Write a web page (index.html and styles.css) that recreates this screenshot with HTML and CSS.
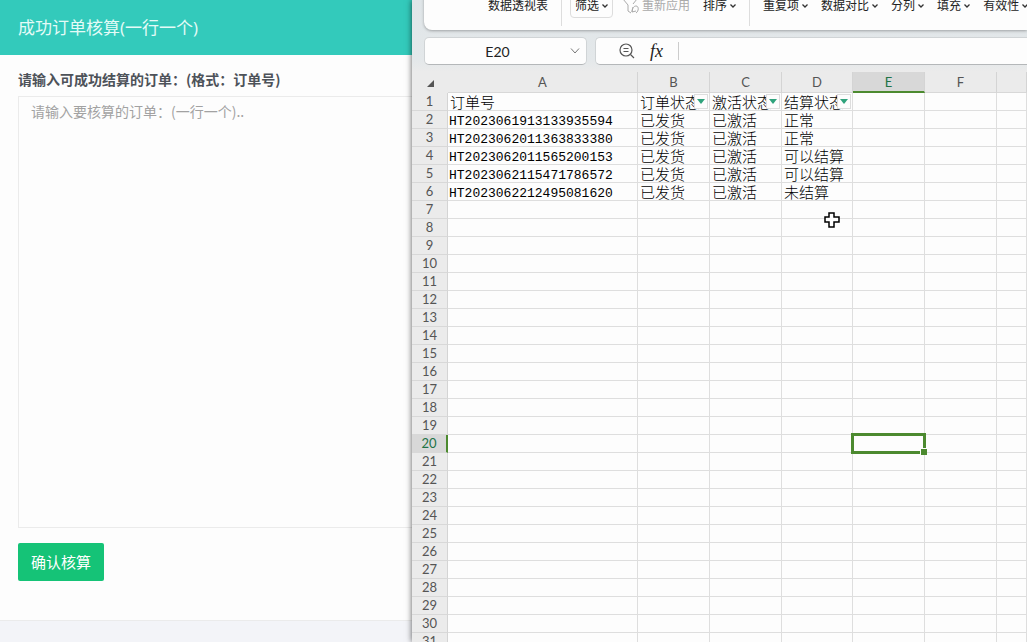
FILE: index.html
```html
<!DOCTYPE html>
<html lang="zh-CN">
<head>
<meta charset="utf-8">
<title>成功订单核算</title>
<link rel="stylesheet" href="styles.css">
</head>
<body>
<div class="desktop">
  <main class="panel">
    <h1 class="panel-title">成功订单核算(一行一个)</h1>
    <form class="panel-form">
      <label class="form-label" for="orders">请输入可成功结算的订单：(格式：订单号)</label>
      <textarea class="form-text" id="orders" placeholder="请输入要核算的订单：(一行一个).."></textarea>
      <button class="submit" type="button">确认核算</button>
    </form>
  </main>
  <section class="sheet">
    <div class="ribbon">
      <button class="tool" type="button">数据透视表</button>
      <span class="divider"></span>
      <button class="tool framed" type="button">筛选<svg class="chev" viewBox="0 0 6 4"><path d="M.5.5 3 3 5.5.5"/></svg></button>
      <button class="tool muted" type="button" disabled><svg class="funnel" viewBox="0 0 17 16"><path d="M1 1h14l-4 5M1 1l5 6v6l3 2M11 9l-1 5 4-1M10 14c0-4 2-6 4-6 3 0 3 5 0 7"/></svg>重新应用</button>
      <button class="tool" type="button">排序<svg class="chev" viewBox="0 0 6 4"><path d="M.5.5 3 3 5.5.5"/></svg></button>
      <span class="divider"></span>
      <button class="tool" type="button">重复项<svg class="chev" viewBox="0 0 6 4"><path d="M.5.5 3 3 5.5.5"/></svg></button>
      <button class="tool" type="button">数据对比<svg class="chev" viewBox="0 0 6 4"><path d="M.5.5 3 3 5.5.5"/></svg></button>
      <button class="tool" type="button">分列<svg class="chev" viewBox="0 0 6 4"><path d="M.5.5 3 3 5.5.5"/></svg></button>
      <button class="tool" type="button">填充<svg class="chev" viewBox="0 0 6 4"><path d="M.5.5 3 3 5.5.5"/></svg></button>
      <button class="tool" type="button">有效性<svg class="chev" viewBox="0 0 6 4"><path d="M.5.5 3 3 5.5.5"/></svg></button>
    </div>
    <div class="formula-row">
      <div class="name-box">
        <input class="name-input" type="text" value="E20" aria-label="名称框">
        <button class="icon-button" type="button" aria-label="展开"><svg class="thin" width="10" height="6" viewBox="0 0 10 6"><path d="M1 .5 5 5 9 .5"/></svg></button>
      </div>
      <div class="formula-box">
        <button class="icon-button" type="button" aria-label="查找"><svg width="16" height="16" viewBox="0 0 16 16"><circle cx="7" cy="7" r="6"/><path d="M11.500 11.500 15 15M4.500 5.500h5M4.500 8.500h5"/></svg></button>
        <button class="icon-button fx" type="button" aria-label="插入函数">fx</button>
        <input class="formula-input" type="text" aria-label="编辑栏">
      </div>
    </div>
    <div class="grid">
      <table class="cells">
        <colgroup><col class="c-num"><col class="c-a"><col class="c-b"><col class="c-b"><col class="c-d"><col class="c-b"><col class="c-b"><col></colgroup>
        <thead>
          <tr><th class="corner"><svg width="7" height="7" viewBox="0 0 7 7"><path d="M7 0v7H0z"/></svg></th><th>A</th><th>B</th><th>C</th><th>D</th><th class="active-col">E</th><th>F</th><th></th></tr>
        </thead>
        <tbody id="rows"></tbody>
      </table>
    </div>
  </section>
  <svg class="pointer" viewBox="0 0 16 16"><path d="M5 1h5v4h5v5h-5v5H5v-5H1V5h4z"/></svg>
</div>
<script src="script.js"></script>
</body>
</html>
```
FILE: styles.css
```css
* { box-sizing: border-box; }
body {
  margin: 0;
  font-family: "Open Sans", "Noto Sans CJK SC", sans-serif;
  color: #222;
}
button, input, textarea { font: inherit; color: inherit; margin: 0; }
button { padding: 0; border: 0; background: none; }
.desktop { position: relative; display: flex; height: 100vh; overflow: hidden; background: #f3f4f8; }

.panel { flex: 0 0 412px; min-width: 0; font-family: "Noto Sans CJK SC", sans-serif; }
.panel-title {
  margin: 0;
  padding: 0 18px;
  background: #33cabb;
  color: #e4fbf7;
  font-family: "Open Sans", "Noto Sans CJK SC", sans-serif;
  font-size: 17px;
  font-weight: 400;
  line-height: 55px;
}
.panel-form {
  display: flex;
  flex-direction: column;
  align-items: flex-start;
  padding: 14px 0 39px 18px;
  background: #fdfdfd;
  border-bottom: 1px solid #ebebeb;
}
.form-label { margin-bottom: 7px; color: #4d5259; font-size: 14px; font-weight: 700; line-height: 20px; }
.form-text {
  width: 100%;
  height: 432px;
  padding: 4px 12px;
  border: 1px solid #ebebeb;
  border-right: 0;
  background: transparent;
  font-size: 14px;
  line-height: 20px;
  resize: none;
}
.form-text::placeholder { color: #a2a2a2; opacity: 1; }
.submit {
  margin-top: 15px;
  padding: 0 13px;
  border-radius: 2px;
  background: #15c377;
  color: #fff;
  font-size: 15px;
  line-height: 38px;
}

.sheet {
  z-index: 1;
  flex: 1;
  min-width: 0;
  display: flex;
  flex-direction: column;
  background: linear-gradient(#dfe5e8, #e4e8ea 60px, #ebebeb 72px);
  box-shadow: 0 0 6px rgba(0, 0, 0, .65);
}
.ribbon {
  flex: none;
  display: flex;
  align-items: flex-start;
  gap: 13px;
  height: 37px;
  margin: -7px 0 0 12px;
  padding-left: 64px;
  overflow: hidden;
  border-radius: 0 0 0 8px;
  background: #fdfdfd;
  box-shadow: 0 1px 3px rgba(0, 0, 0, .3);
  font-size: 12px;
  white-space: nowrap;
}
.tool { flex: none; display: flex; align-items: center; gap: 3px; height: 25px; line-height: 24px; }
.framed { padding: 0 4px; margin: 0 -4px 0 -5px; border: 1px solid #ddd; border-radius: 4px; }
.muted { color: #aaa; }
.divider { flex: none; width: 1px; height: 33px; background: #ddd; }
.chev { width: 6px; height: 4px; fill: none; stroke: #333; stroke-width: 1.3; }
.funnel { width: 17px; height: 16px; fill: none; stroke: #aaa; }
.formula-row { flex: none; display: flex; gap: 8px; padding: 7px 0 7px 12px; }
.name-box, .formula-box {
  display: flex;
  align-items: center;
  height: 28px;
  border: 1px solid #d0d4d6;
  border-bottom-color: #b4b7b9;
  background: #fdfdfd;
}
.name-box { flex: none; width: 163px; padding-right: 6px; border-radius: 5px; }
.name-input { flex: 1; min-width: 0; padding: 0; border: 0; background: none; font-family: Lato, sans-serif; font-size: 14px; text-align: center; }
.icon-button { display: flex; }
.icon-button svg { fill: none; stroke: #555; stroke-width: 1.2; }
.icon-button .thin { stroke: #777; stroke-width: 1; }
.formula-box { flex: 1; min-width: 0; padding-left: 23px; gap: 15px; border-right: 0; border-radius: 5px 0 0 5px; }
.fx { font-family: "Liberation Serif", serif; font-size: 18px; font-style: italic; line-height: 20px; }
.formula-input { flex: 1; min-width: 0; height: 18px; border: 0; border-left: 1px solid #ccc; background: none; }

.grid { flex: 1; min-height: 0; overflow: hidden; }
.cells { width: 100%; table-layout: fixed; border-collapse: separate; border-spacing: 0; background: #fdfdfd; }
.c-num { width: 36px; }
.c-a { width: 190px; }
.c-b { width: 72px; }
.c-d { width: 71px; }
.cells th {
  padding: 0;
  border-right: 1px solid #d4d4d4;
  border-bottom: 1px solid #d8d8d8;
  background: #ebebeb;
  color: #555;
  font-family: Lato, sans-serif;
  font-size: 13px;
  font-weight: 400;
  line-height: 17px;
}
.cells thead th { height: 21px; line-height: 20px; }
.cells .corner { padding-left: 1px; border-color: #ebebeb; }
.corner svg { fill: #555; }
.cells thead .active-col { padding-top: 1px; background: #d8d8d8; border-bottom: 2px solid #4c8a2f; color: #217346; line-height: 18px; }
.cells .active-row { background: #d8d8d8; border-right: 2px solid #4c8a2f; color: #217346; }
.cells td {
  position: relative;
  height: 18px;
  padding: 0 0 0 2px;
  border-right: 1px solid #dedede;
  border-bottom: 1px solid #dedede;
  color: #000;
  font-family: "Noto Sans CJK SC", sans-serif;
  font-size: 15px;
  font-weight: 300;
  line-height: 17px;
  white-space: nowrap;
  overflow: hidden;
}
.cells .order { padding: 4px 0 0 1px; font-family: "Liberation Mono", monospace; font-size: 13px; line-height: 13px; }
.cells .selected { z-index: 1; overflow: visible; }
.selected::before { content: ""; position: absolute; inset: -2px; border: 3px solid #4c8a2f; }
.selected::after { content: ""; position: absolute; right: -3px; bottom: -3px; width: 6px; height: 6px; border: solid #fdfdfd; border-width: 1px 0 0 1px; background: #4c8a2f; }
.filter { position: absolute; right: 1px; top: 1px; display: grid; place-items: center; width: 14px; height: 15px; border: 1px solid #ddd; background: #fdfdfd; }
.filter svg { fill: #2fa37c; }
.pointer { position: absolute; z-index: 2; left: 824px; top: 212px; width: 16px; height: 16px; fill: #fff; stroke: #000; stroke-width: 1.5; }
```
FILE: script.js
```js
const orders = [
  ["HT2023061913133935594", "已发货", "已激活", "正常"],
  ["HT2023062011363833380", "已发货", "已激活", "正常"],
  ["HT2023062011565200153", "已发货", "已激活", "可以结算"],
  ["HT2023062115471786572", "已发货", "已激活", "可以结算"],
  ["HT2023062212495081620", "已发货", "已激活", "未结算"]
];
const titles = ["订单号", "订单状态", "激活状态", "结算状态"];
const arrow = '<button class="filter" type="button" aria-label="筛选"><svg width="8" height="5" viewBox="0 0 8 5"><path d="M0 0h8L4 5z"/></svg></button>';
let html = "";
for (let row = 1; row <= 32; row++) {
  html += `<tr><th class="${row === 20 ? "active-row" : ""}">${row}</th>`;
  for (let col = 0; col < 7; col++) {
    let text = "";
    let name = "";
    if (row === 1 && col < 4) text = titles[col] + (col ? arrow : "");
    else if (row > 1 && row < 7 && col < 4) {
      text = orders[row - 2][col];
      if (col === 0) name = "order";
    }
    if (row === 20 && col === 4) name = "selected";
    html += `<td class="${name}">${text}</td>`;
  }
  html += "</tr>";
}
document.getElementById("rows").innerHTML = html;
```
